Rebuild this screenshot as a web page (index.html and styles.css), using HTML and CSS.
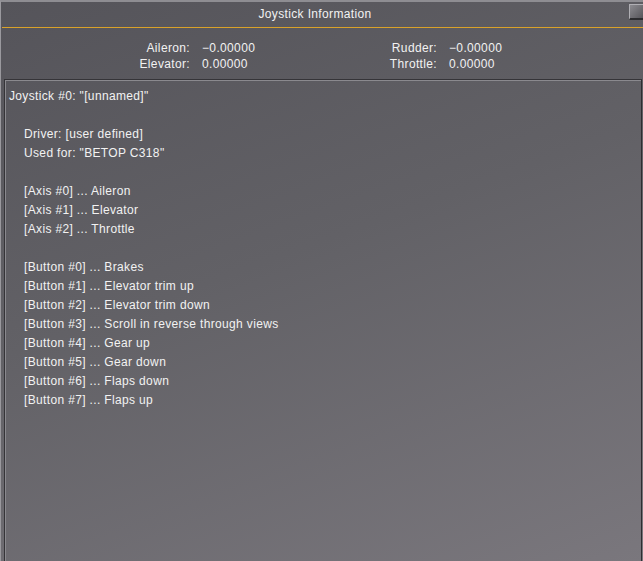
FILE: index.html
```html
<!DOCTYPE html>
<html>
<head>
<meta charset="utf-8">
<title>Joystick Information</title>
<link rel="stylesheet" href="styles.css">
</head>
<body>
<div class="window">
  <div class="titlebar">
    <div class="title">Joystick Information</div>
    <div class="closebox"></div>
  </div>
  <div class="rule"></div>
  <div class="info">
    <div class="label">Aileron:</div><div class="value">&minus;0.00000</div>
    <div class="label">Rudder:</div><div class="value">&minus;0.00000</div>
    <div class="label">Elevator:</div><div class="value">0.00000</div>
    <div class="label">Throttle:</div><div class="value">0.00000</div>
  </div>
  <div class="panel">
    <div class="line">Joystick #0: "[unnamed]"</div>
    <div class="group">
      <div class="line">Driver: [user defined]</div>
      <div class="line">Used for: "BETOP C318"</div>
    </div>
    <div class="group">
      <div class="line">[Axis #0] ... Aileron</div>
      <div class="line">[Axis #1] ... Elevator</div>
      <div class="line">[Axis #2] ... Throttle</div>
    </div>
    <div class="group">
      <div class="line">[Button #0] ... Brakes</div>
      <div class="line">[Button #1] ... Elevator trim up</div>
      <div class="line">[Button #2] ... Elevator trim down</div>
      <div class="line">[Button #3] ... Scroll in reverse through views</div>
      <div class="line">[Button #4] ... Gear up</div>
      <div class="line">[Button #5] ... Gear down</div>
      <div class="line">[Button #6] ... Flaps down</div>
      <div class="line">[Button #7] ... Flaps up</div>
    </div>
  </div>
</div>
</body>
</html>
```

FILE: styles.css
```css
html, body {
  margin: 0;
  padding: 0;
  width: 643px;
  height: 561px;
  overflow: hidden;
}
body {
  background: linear-gradient(160deg, #55545a 0%, #626166 45%, #7a777d 100%);
  font-family: "Liberation Sans", Arial, sans-serif;
  font-size: 12px;
  letter-spacing: 0.35px;
  color: #f2f2f2;
}
.window {
  height: 559px;
  border-top: 2px solid #8e8d92;
  border-left: 1px solid #9a999e;
  display: flex;
  flex-direction: column;
}
.titlebar {
  height: 25px;
  display: flex;
  align-items: flex-start;
}
.title {
  flex: 1;
  text-align: center;
  line-height: 24px;
}
.closebox {
  width: 13px;
  height: 13px;
  margin-top: 2px;
  border-top: 1px solid #b0afb4;
  border-left: 1px solid #b0afb4;
  border-bottom: 2px solid #2c2c2f;
  background: linear-gradient(135deg, #8c8b90, #56555a);
}
.rule {
  height: 1px;
  margin-left: 1px;
  background: #d9a22a;
}
.info {
  display: grid;
  grid-template-columns: 201px 100px 147px auto;
  grid-auto-rows: 16px;
  padding-top: 12px;
  margin-bottom: 7px;
  line-height: 16px;
}
.label {
  text-align: right;
  padding-right: 12px;
}
.panel {
  flex: 1;
  margin-left: 3px;
  margin-right: 1px;
  border-top: 1px solid #353438;
  border-left: 1px solid #353438;
  border-right: 1px solid #2e2d31;
  box-shadow: inset 1px 1px 0 #8a898e;
  padding: 7px 0 0 4px;
  line-height: 19px;
}
.group {
  margin-top: 19px;
  padding-left: 15px;
}
```
